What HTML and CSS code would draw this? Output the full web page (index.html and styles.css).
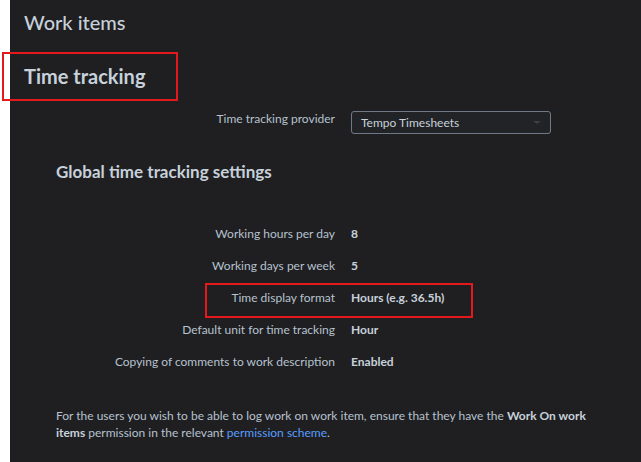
FILE: index.html
```html
<!DOCTYPE html>
<html>
<head>
<meta charset="utf-8">
<link rel="stylesheet" href="styles.css">
</head>
<body>
<div class="panel">
  <h1 class="page-title">Work items</h1>
  <h2 class="section-title">Time tracking</h2>
  <div class="field-row provider-row">
    <div class="label">Time tracking provider</div>
    <div class="select">
      <span class="select-text">Tempo Timesheets</span>
      <span class="caret"></span>
    </div>
  </div>
  <h3 class="sub-title">Global time tracking settings</h3>
  <div class="settings">
    <div class="field-row setting"><div class="label">Working hours per day</div><div class="value">8</div></div>
    <div class="field-row setting"><div class="label">Working days per week</div><div class="value">5</div></div>
    <div class="field-row setting highlight"><div class="label">Time display format</div><div class="value">Hours (e.g. 36.5h)</div></div>
    <div class="field-row setting"><div class="label">Default unit for time tracking</div><div class="value">Hour</div></div>
    <div class="field-row setting"><div class="label">Copying of comments to work description</div><div class="value">Enabled</div></div>
  </div>
  <p class="note">For the users you wish to be able to log work on work item, ensure that they have the <strong>Work On work items</strong> permission in the relevant <a href="#" class="link">permission scheme</a>.</p>
</div>
</body>
</html>
```

FILE: styles.css
```css
html, body {
  margin: 0;
  padding: 0;
  background: #ffffff;
}
body {
  font-family: "Lato", "Liberation Sans", sans-serif;
  height: 462px;
  overflow: hidden;
}
.panel {
  margin-left: 10px;
  background: #1f1f21;
  min-height: 462px;
  padding-top: 10px;
  box-sizing: border-box;
  color: #b6c2cf;
}
.page-title {
  margin: 0 0 0 14px;
  font-size: 20px;
  line-height: 24px;
  font-weight: 500;
  color: #c7d1db;
}
.section-title {
  margin: 18px 0 0 -8px;
  width: 176px;
  box-sizing: border-box;
  border: 2px solid #e3191b;
  padding-left: 20px;
  font-size: 20px;
  line-height: 45px;
  font-weight: 700;
  color: #c7d1db;
}
.field-row {
  display: grid;
  grid-template-columns: 325px 1fr;
  column-gap: 16px;
  font-size: 12px;
}
.label {
  text-align: right;
}
.provider-row {
  margin-top: 10px;
  line-height: 16px;
}
.select {
  width: 200px;
  height: 23px;
  box-sizing: border-box;
  border: 1px solid #6f7a86;
  border-radius: 3px;
  background: #222326;
  display: flex;
  align-items: center;
  justify-content: space-between;
  padding: 0 9px 0 9px;
  color: #c7d1db;
}
.caret {
  width: 0;
  height: 0;
  border-left: 4px solid transparent;
  border-right: 4px solid transparent;
  border-top: 3px solid #3c4047;
}
.sub-title {
  margin: 27px 0 0 46px;
  font-size: 17px;
  line-height: 22px;
  font-weight: 700;
  color: #c7d1db;
}
.settings {
  margin-top: 35px;
}
.setting {
  line-height: 32px;
  height: 32px;
}
.value {
  font-weight: 700;
  color: #c7d1db;
}
.highlight {
  position: relative;
}
.highlight::after {
  content: "";
  position: absolute;
  left: 195px;
  top: 1px;
  width: 268px;
  height: 35px;
  box-sizing: border-box;
  border: 2px solid #e3191b;
}
.note {
  margin: 29px 0 0 46px;
  width: 548px;
  font-size: 12px;
  line-height: 17px;
}
.note strong {
  color: #c7d1db;
}
.link {
  color: #579dff;
  text-decoration: none;
}
```
